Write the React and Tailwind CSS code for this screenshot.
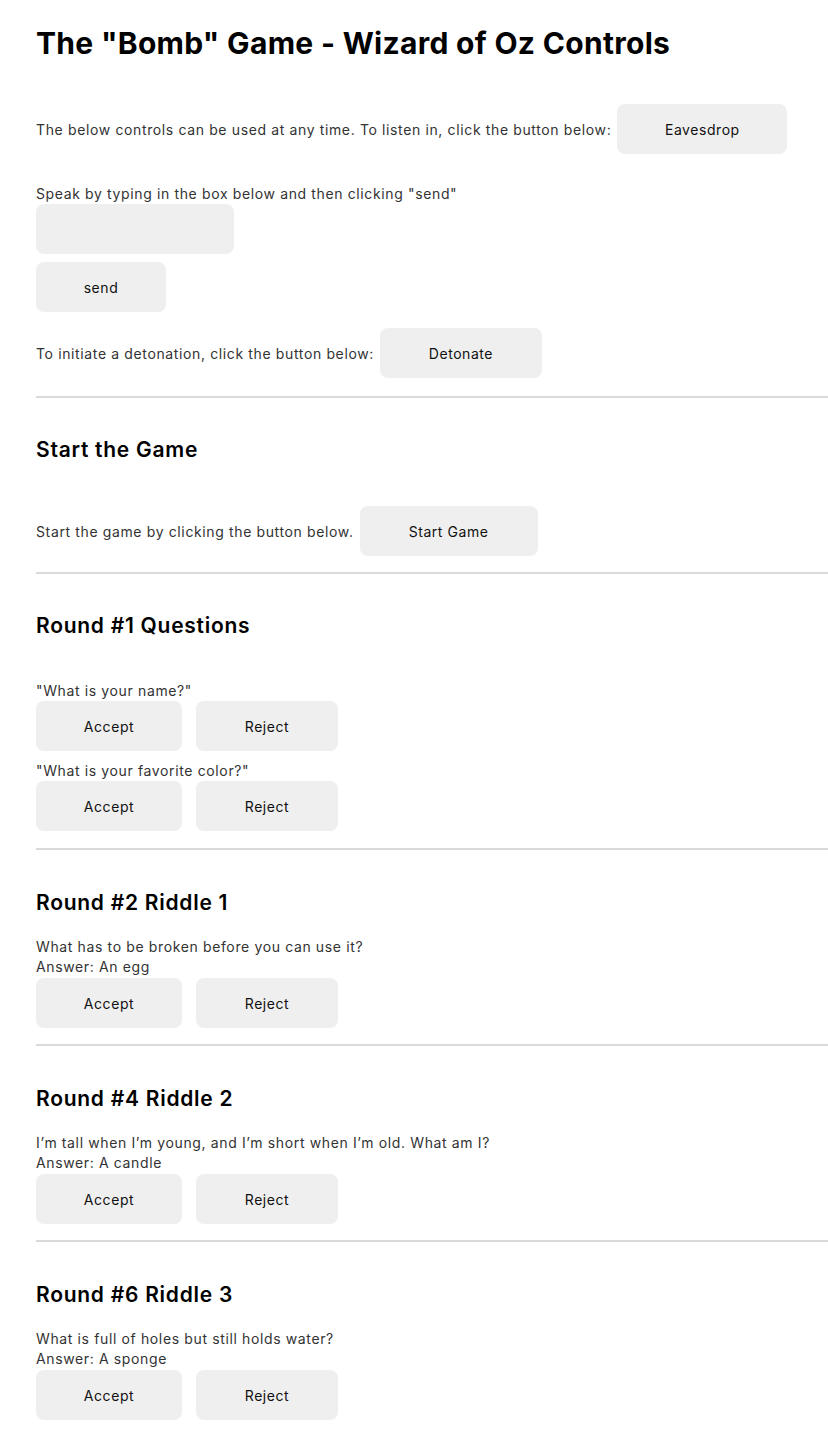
import React, { useState } from 'react';

const btn =
  'h-[50px] rounded-lg bg-[#efefef] text-[14px] text-[#111] tracking-[0.04em] flex items-center justify-center shrink-0';

const heading = 'text-[21px] leading-[24px] font-semibold text-black tracking-[0.035em]';

const Divider = () => <div className="h-[2px] bg-[#dadada] ml-[36px]" />;

const AcceptReject = () => (
  <div className="flex gap-[14px]">
    <button className={`${btn} w-[146px]`}>Accept</button>
    <button className={`${btn} w-[142px]`}>Reject</button>
  </div>
);

const Riddle = ({ title, question, answer }) => (
  <section className="pl-[36px] pt-[41px] pb-[16px]">
    <h2 className={heading}>{title}</h2>
    <p className="mt-[22px] leading-[20px]">{question}</p>
    <p className="leading-[20px]">Answer: {answer}</p>
    <div className="mt-[1px]">
      <AcceptReject />
    </div>
  </section>
);

const App = () => {
  const [message, setMessage] = useState('');

  return (
    <div
      className="bg-white min-h-[1452px] text-[14px] text-[#333] tracking-[0.045em]"
      style={{ fontFamily: 'Inter, "Noto Sans", sans-serif' }}
    >
      {/* Header + controls */}
      <div className="pl-[36px] pt-[25px] pb-[18px]">
        <h1 className="text-[30px] leading-[36px] font-bold text-black tracking-[0.01em]">
          The "Bomb" Game - Wizard of Oz Controls
        </h1>

        <div className="flex items-center gap-[6px] mt-[43px]">
          <span>The below controls can be used at any time. To listen in, click the button below:</span>
          <button className={`${btn} w-[170px]`}>Eavesdrop</button>
        </div>

        <p className="mt-[30px] leading-[20px]">Speak by typing in the box below and then clicking "send"</p>
        <input
          value={message}
          onChange={(e) => setMessage(e.target.value)}
          className="block w-[198px] h-[50px] rounded-lg bg-[#efefef] outline-none px-3"
        />
        <button className={`${btn} w-[130px] mt-[8px]`}>send</button>

        <div className="flex items-center gap-[6px] mt-[16px]">
          <span>To initiate a detonation, click the button below:</span>
          <button className={`${btn} w-[162px]`}>Detonate</button>
        </div>
      </div>

      <Divider />

      {/* Start */}
      <section className="pl-[36px] pt-[40px] pb-[16px]">
        <h2 className={heading}>Start the Game</h2>
        <div className="flex items-center gap-[6px] mt-[44px]">
          <span>Start the game by clicking the button below.</span>
          <button className={`${btn} w-[178px]`}>Start Game</button>
        </div>
      </section>

      <Divider />

      {/* Round 1 */}
      <section className="pl-[36px] pt-[40px] pb-[17px]">
        <h2 className={heading}>Round #1 Questions</h2>
        <p className="mt-[43px] leading-[20px]">"What is your name?"</p>
        <AcceptReject />
        <p className="mt-[10px] leading-[20px]">"What is your favorite color?"</p>
        <AcceptReject />
      </section>

      <Divider />

      <Riddle
        title="Round #2 Riddle 1"
        question="What has to be broken before you can use it?"
        answer="An egg"
      />

      <Divider />

      <Riddle
        title="Round #4 Riddle 2"
        question="I’m tall when I’m young, and I’m short when I’m old. What am I?"
        answer="A candle"
      />

      <Divider />

      <Riddle
        title="Round #6 Riddle 3"
        question="What is full of holes but still holds water?"
        answer="A sponge"
      />
    </div>
  );
};

export default App;
